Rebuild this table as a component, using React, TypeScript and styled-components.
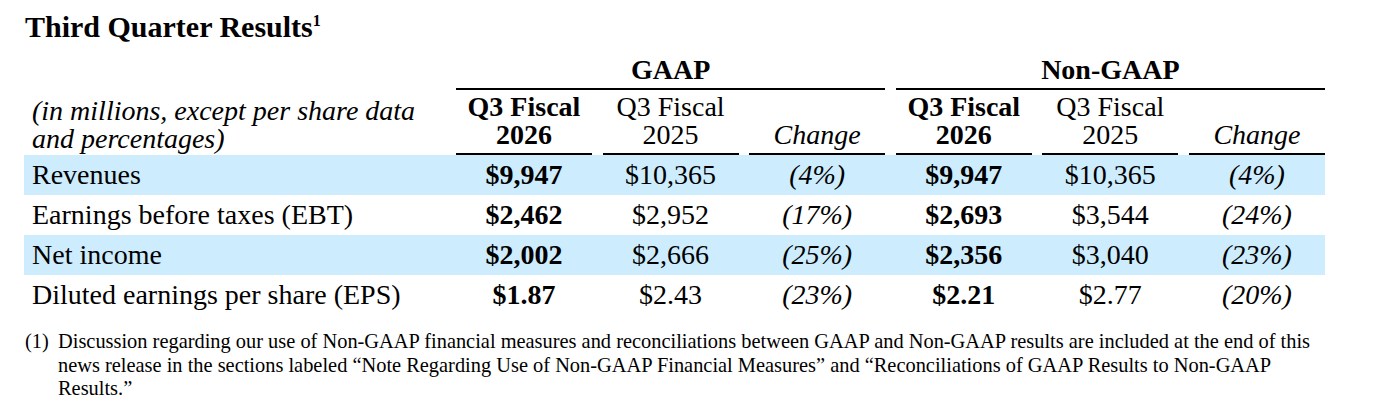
import React from "react";
import styled, { createGlobalStyle } from "styled-components";

const GlobalStyle = createGlobalStyle`
  html, body {
    margin: 0;
    padding: 0;
    background: #ffffff;
  }
  body {
    font-family: "Liberation Serif", "Times New Roman", serif;
    color: #000000;
  }
`;

const SHADE = "#cdedff";
const COLS = "421.4px repeat(6, 136px)";
const GAP = "10.6px";

interface Line {
  label: string;
  values: string[];
}

const lines: Line[] = [
  {
    label: "Revenues",
    values: ["$9,947", "$10,365", "(4%)", "$9,947", "$10,365", "(4%)"],
  },
  {
    label: "Earnings before taxes (EBT)",
    values: ["$2,462", "$2,952", "(17%)", "$2,693", "$3,544", "(24%)"],
  },
  {
    label: "Net income",
    values: ["$2,002", "$2,666", "(25%)", "$2,356", "$3,040", "(23%)"],
  },
  {
    label: "Diluted earnings per share (EPS)",
    values: ["$1.87", "$2.43", "(23%)", "$2.21", "$2.77", "(20%)"],
  },
];

const Page = styled.div`
  width: 1301px;
  padding: 10px 0 0 24px;
`;

const Title = styled.h1`
  margin: 0 0 0 1px;
  font-size: 30px;
  line-height: 34px;
  font-weight: 700;
`;

const Sup = styled.span`
  font-size: 16px;
  vertical-align: 11px;
  line-height: 0;
`;

const Table = styled.div`
  margin-top: 11.6px;
  display: flex;
  flex-direction: column;
`;

const Row = styled.div<{ $shaded?: boolean }>`
  display: grid;
  grid-template-columns: ${COLS};
  column-gap: ${GAP};
  align-items: end;
  background: ${(p) => (p.$shaded ? SHADE : "transparent")};
`;

const GroupHead = styled.div<{ $col: number }>`
  grid-column: ${(p) => p.$col} / span 3;
  text-align: center;
  font-weight: 700;
  font-size: 28px;
  line-height: 28px;
  padding-bottom: 4px;
  border-bottom: 2px solid #000;
`;

const UnitsNote = styled.div`
  grid-column: 1;
  font-style: italic;
  font-size: 28px;
  line-height: 28px;
  padding: 0 0 2px 8px;
`;

const ColHead = styled.div<{ $bold?: boolean; $italic?: boolean }>`
  text-align: center;
  font-size: 28px;
  line-height: 28px;
  font-weight: ${(p) => (p.$bold ? 700 : 400)};
  font-style: ${(p) => (p.$italic ? "italic" : "normal")};
  padding: 3.4px 0 4.4px;
  border-bottom: 2px solid #000;
`;

const Label = styled.div`
  font-size: 28px;
  line-height: 40px;
  padding-left: 8px;
  white-space: nowrap;
`;

const Value = styled.div<{ $bold?: boolean; $italic?: boolean }>`
  text-align: center;
  font-size: 28px;
  line-height: 40px;
  font-weight: ${(p) => (p.$bold ? 700 : 400)};
  font-style: ${(p) => (p.$italic ? "italic" : "normal")};
`;

const Footnote = styled.div`
  margin-top: 15px;
  display: grid;
  grid-template-columns: 34px 1fr;
  font-size: 20.4px;
  line-height: 23.5px;
`;

const FootMark = styled.span`
  padding-left: 1px;
`;

const Empty = styled.div``;

export default function App() {
  const heads: { text: React.ReactNode; bold?: boolean; italic?: boolean }[] = [
    { text: <>Q3 Fiscal<br />2026</>, bold: true },
    { text: <>Q3 Fiscal<br />2025</> },
    { text: "Change", italic: true },
  ];

  return (
    <>
      <GlobalStyle />
      <Page>
        <Title>
          Third Quarter Results<Sup>1</Sup>
        </Title>
        <Table>
          <Row>
            <Empty />
            <GroupHead $col={2}>GAAP</GroupHead>
            <GroupHead $col={5}>Non-GAAP</GroupHead>
          </Row>
          <Row>
            <UnitsNote>
              (in millions, except per share data
              <br />
              and percentages)
            </UnitsNote>
            {[...heads, ...heads].map((h, i) => (
              <ColHead key={i} $bold={h.bold} $italic={h.italic}>
                {h.text}
              </ColHead>
            ))}
          </Row>
          {lines.map((line, r) => (
            <Row key={line.label} $shaded={r % 2 === 0}>
              <Label>{line.label}</Label>
              {line.values.map((v, i) => (
                <Value key={i} $bold={i % 3 === 0} $italic={i % 3 === 2}>
                  {v}
                </Value>
              ))}
            </Row>
          ))}
        </Table>
        <Footnote>
          <FootMark>(1)</FootMark>
          <span>
            Discussion regarding our use of Non-GAAP financial measures and
            reconciliations between GAAP and Non-GAAP results are included at
            the end of this news release in the sections labeled “Note
            Regarding Use of Non-GAAP Financial Measures” and “Reconciliations
            of GAAP Results to Non-GAAP Results.”
          </span>
        </Footnote>
      </Page>
    </>
  );
}
